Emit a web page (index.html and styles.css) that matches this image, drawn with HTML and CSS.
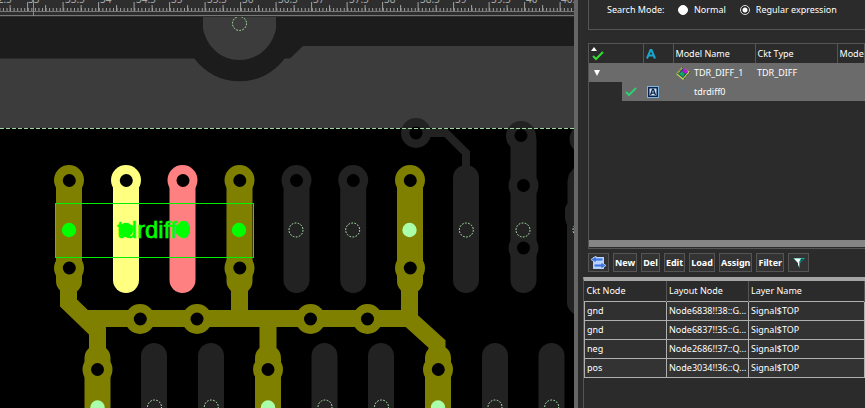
FILE: index.html
```html
<!DOCTYPE html>
<html lang="en">
<head>
<meta charset="utf-8">
<title>Layout Editor</title>
<link rel="stylesheet" href="styles.css">
</head>
<body>
<div class="app">
  <main class="board">
    <svg class="board-view" viewBox="0 0 574 408" preserveAspectRatio="xMinYMin slice" role="img" aria-label="Board layout">
      <defs>
        <g id="pad"><path class="grey-line" d="M0 180V280"/><circle r="15" cy="180" class="grey"/></g>
        <path id="low-pad" class="grey-line" d="M0 356V430"/>
        <circle id="hole" r="6.5"/>
        <circle id="via" r="15"/>
        <circle id="pin" r="7" class="pin"/>
      </defs>
      <rect width="574" height="408"/>
      <rect y="16" width="574" height="43" class="gap"/>
      <path class="plane" d="M0 58.500H195A56 56 0 0 0 284 58.500H290L303 46H574V128H0Z"/>
      <path class="gap" d="M194 58A56 56 0 0 0 285 58Z"/>
      <path class="plane" d="M203 16H276V29C272 47 258 60 239.500 60S207 47 203 29Z"/>

      <circle cx="416" cy="133" r="15" class="grey"/>
      <path class="grey-trace" d="M430 133H446L466 153V170"/>
      <path class="grey-line" d="M466 178V280M523.500 140V280"/>
      <g class="grey">
        <circle cx="521" cy="136" r="15"/><circle cx="523.500" cy="185.500" r="15"/><circle cx="523.500" cy="248" r="15"/>
        <circle cx="584.500" cy="139" r="15"/>
        <path d="M574 168L569 174 567.500 181V203L565 208V219L567 225V304Q568 310 574 314Z"/>
      </g>
      <use href="#pad" x="296.500"/><use href="#pad" x="353.200"/>
      <use href="#low-pad" x="154"/><use href="#low-pad" x="211"/><use href="#low-pad" x="324.500"/><use href="#low-pad" x="381"/><use href="#low-pad" x="495"/><use href="#low-pad" x="551.500"/>

      <path class="yellow-line" d="M126 180V280"/><circle cx="126" cy="180" r="15" class="yellow"/>
      <path class="pink-line" d="M182.500 180V280"/><circle cx="182.500" cy="180" r="15" class="pink"/>

      <path class="olive-line" d="M69 180V281M239.500 180V281M410 180V281M97.500 358V430M268 358V430M438 358V430"/>
      <path class="olive-trace" d="M68.500 285V303L97.500 331V360M84 318.500H410M239.500 285V318M268 318V360M409.500 285V319L437 344V360"/>
      <g class="olive">
        <use href="#via" x="69" y="180"/><use href="#via" x="239.500" y="180"/><use href="#via" x="410" y="180"/>
        <use href="#via" x="69" y="268"/><use href="#via" x="239.500" y="268"/><use href="#via" x="410" y="268"/>
        <use href="#via" x="140" y="319"/><use href="#via" x="197" y="319"/><use href="#via" x="310.500" y="319"/><use href="#via" x="367.500" y="319"/>
        <use href="#via" x="97.500" y="369.500"/><use href="#via" x="268" y="369.500"/><use href="#via" x="438" y="369.500"/>
      </g>
      <g>
        <use href="#hole" x="69.300" y="180.500"/><use href="#hole" x="126.300" y="180.500"/><use href="#hole" x="183" y="180.500"/><use href="#hole" x="239.800" y="180.500"/><use href="#hole" x="296.500" y="180.500"/><use href="#hole" x="353.300" y="180.500"/><use href="#hole" x="410.300" y="180.500"/>
        <use href="#hole" x="69.300" y="268"/><use href="#hole" x="239.800" y="268"/><use href="#hole" x="410.300" y="268"/>
        <use href="#hole" x="140.300" y="319"/><use href="#hole" x="197" y="319"/><use href="#hole" x="310.500" y="319"/><use href="#hole" x="367.500" y="319"/>
        <use href="#hole" x="97.500" y="369.500"/><use href="#hole" x="268" y="369.500"/><use href="#hole" x="438.300" y="369.500"/>
        <use href="#hole" x="416" y="133"/><use href="#hole" x="521" y="135.500"/><use href="#hole" x="523.500" y="185.500"/><use href="#hole" x="523.500" y="248"/>
      </g>
      <path class="outline" d="M0 128.500H574"/>
      <use href="#pin" x="239.500" y="23.500"/><use href="#pin" x="296" y="230"/><use href="#pin" x="352.700" y="230"/><use href="#pin" x="466.300" y="230"/><use href="#pin" x="523" y="230"/><use href="#pin" x="580" y="230"/>
      <use href="#pin" x="154.500" y="407"/><use href="#pin" x="211.300" y="407"/><use href="#pin" x="325" y="407"/><use href="#pin" x="381.500" y="407"/><use href="#pin" x="495" y="407"/><use href="#pin" x="551.700" y="407"/>
      <g class="mint"><circle cx="409.500" cy="230" r="7.200"/><circle cx="97.500" cy="407.500" r="7.200"/><circle cx="268" cy="407.500" r="7.200"/><circle cx="438" cy="407.500" r="7.200"/></g>
      <path class="select-box" d="M55.500 203.500H253.500V257.500H55.500Z"/>
      <text class="select-name" x="117" y="238">tdrdiff0</text>
      <g class="green"><circle cx="69" cy="230" r="7.200"/><circle cx="126" cy="230" r="7.200"/><circle cx="182.500" cy="230" r="7.200"/><circle cx="239" cy="230" r="7.200"/></g>

      <rect width="574" height="17" class="ruler"/>
      <g class="ticks">
        <path class="tick-small" d="M-.600 9.500H574"/>
        <path class="tick-mid" d="M9.600 8H574"/>
        <path class="tick-major" d="M27.100 6.500H574"/>
      </g>
      <g class="ruler-text">
        <text x="-8" y="3">32.5</text><text x="28" y="3">33</text><text x="65" y="3">33.5</text><text x="100" y="3">34</text><text x="136" y="3">34.5</text><text x="171" y="3">35</text><text x="207" y="3">35.5</text><text x="242" y="3">36</text><text x="278" y="3">36.5</text><text x="313" y="3">37</text><text x="349" y="3">37.5</text><text x="384" y="3">38</text><text x="420" y="3">38.5</text><text x="455" y="3">39</text><text x="491" y="3">39.5</text><text x="526" y="3">40</text><text x="561" y="3">40.5</text>
      </g>
      <path class="ruler-edge" d="M0 11.500H574M0 15.500H574"/>
      <path class="cursor" d="M33.500 0V16"/>
    </svg>
  </main>
  <div class="splitter"></div>
  <aside class="side">
    <div class="search" role="radiogroup" aria-label="Search Mode">
      <span class="search-title">Search Mode:</span>
      <label class="option"><input type="radio" name="mode">Normal</label>
      <label class="option"><input type="radio" name="mode" checked>Regular expression</label>
    </div>
    <div class="models">
      <table class="model-table">
        <colgroup><col class="c-check"><col class="c-active"><col class="c-type"><col class="c-type"><col></colgroup>
        <thead>
          <tr>
            <th><svg class="icon-sort" viewBox="0 0 14 14"><path d="M3 0L6 4H0Z" fill="#fff"/><path d="M2 9L5 12 12 5" fill="none" stroke="#32dc32" stroke-width="2"/></svg></th>
            <th><svg class="icon-a" viewBox="0 0 10 10"><path d="M1 9.500L4.500 1H5.500L9 9.500M2.500 6.500H7.500" fill="none" stroke="#1ca5cc" stroke-width="2"/></svg></th>
            <th>Model Name</th><th>Ckt Type</th><th>Mode</th>
          </tr>
        </thead>
        <tbody>
          <tr class="picked">
            <td><svg class="icon-open" viewBox="0 0 8 8"><path d="M1 1H7L4 7Z" fill="#fff"/></svg></td>
            <td></td>
            <td><span class="name"><svg class="icon-chip" viewBox="0 0 14 14"><path d="M0 8L6 1 14 6 7 14Z" fill="#b9d64a"/><path d="M1 8L7 1M8 13L14 6" stroke="#26331a" stroke-dasharray="1 1"/><path d="M2 8L7 2 12 6 7 12Z" fill="#193c6b"/><path d="M3 8L6 5 9 8 7 11Z" fill="#15a365"/><path d="M6 5L8 2 12 5 10 8Z" fill="#b31cd0"/></svg>TDR_DIFF_1</span></td>
            <td>TDR_DIFF</td><td></td>
          </tr>
          <tr class="picked">
            <td class="branch"><svg class="icon-check" viewBox="0 0 12 10"><path d="M1 5L4 8 11 1" fill="none" stroke="#2bcf70" stroke-width="2"/></svg></td>
            <td><svg class="icon-box" viewBox="0 0 12 12"><rect x=".500" y=".500" width="11" height="11" fill="#08244d" stroke="#7fb4dd"/><rect x="2.500" y="2.500" width="7" height="7" fill="#d8e6f3"/><path d="M3.500 9L5.500 3.500H6.500L8.500 9M4.500 7.200H7.500" fill="none" stroke="#08244d" stroke-width="1.300"/></svg></td>
            <td><span class="name"><svg class="icon-chip" viewBox="0 0 14 14"><path d="M6.500 1V6.500H12" fill="none" stroke="#3f7196" stroke-dasharray="1 1"/></svg>tdrdiff0</span></td>
            <td></td><td></td>
          </tr>
        </tbody>
      </table>
      <div class="scrollbar"></div>
    </div>
    <div class="toolbar">
      <button class="swap" aria-label="Refresh"><svg class="icon-swap" viewBox="0 0 16 14"><path d="M2 1H13V13H2Z" fill="#a9ceff"/><path d="M5 0L0 3.500 5 7V5H12V2H5ZM10 6L15 9.500 10 13V11H3V8H10Z" fill="#3f76e4" stroke="#d5e6ff" stroke-width=".700"/></svg></button>
      <button>New</button><button>Del</button><button>Edit</button><button>Load</button><button>Assign</button><button>Filter</button>
      <button class="swap" aria-label="Filter list"><svg class="icon-funnel" viewBox="0 0 12 10"><path d="M0 0H12L7 5V10L5 8V5Z" fill="#19a79b"/><path d="M1 .500H8L6 4V8L5 7V5Z" fill="#fff"/><path d="M8 1H10.500L7 4.500Z" fill="#064c48"/></svg></button>
    </div>
    <div class="nodes">
      <table class="node-table">
        <colgroup><col class="c-node"><col class="c-node"><col></colgroup>
        <thead><tr><th>Ckt Node</th><th>Layout Node</th><th>Layer Name</th></tr></thead>
        <tbody>
          <tr><td>gnd</td><td>Node6838!!38::G...</td><td>Signal$TOP</td></tr>
          <tr><td>gnd</td><td>Node6837!!35::G...</td><td>Signal$TOP</td></tr>
          <tr><td>neg</td><td>Node2686!!37::Q...</td><td>Signal$TOP</td></tr>
          <tr><td>pos</td><td>Node3034!!36::Q...</td><td>Signal$TOP</td></tr>
        </tbody>
      </table>
    </div>
  </aside>
</div>
</body>
</html>
```

FILE: styles.css
```css
* { box-sizing: border-box; }
body {
  margin: 0;
  background: #2b2b2b;
  color: #fff;
  font: 9px/14px "Noto Sans", "Open Sans", sans-serif;
}
svg { display: block; }
.app {
  display: grid;
  grid-template-columns: minmax(0, 2fr) 4px minmax(0, 1fr);
  height: 100vh;
  overflow: hidden;
}
.board { min-width: 0; overflow: hidden; background: #000; }
.board-view { width: 100%; height: 100%; }
.splitter { background: #666; }

/* Board drawing */
.gap { fill: #1c1c1c; }
.plane { fill: #3c3c3c; }
.grey { fill: #222; }
.olive { fill: #808000; }
.yellow { fill: #ffff80; }
.pink { fill: #ff8080; }
.mint { fill: #aaffaa; }
.green { fill: #0f0; }
.grey-line, .olive-line, .yellow-line, .pink-line {
  fill: none;
  stroke-width: 26;
  stroke-linecap: round;
}
.grey-line, .grey-trace { stroke: #222; }
.olive-line, .olive-trace { stroke: #808000; }
.yellow-line { stroke: #ffff80; }
.pink-line { stroke: #ff8080; }
.grey-trace { fill: none; stroke-width: 8; }
.olive-trace { fill: none; stroke-width: 17; }
.pin { fill: none; stroke: #b4f0b4; stroke-dasharray: 1.7 1.44; }
.outline { stroke: #9bd89b; stroke-dasharray: 4 2; }
.select-box { fill: none; stroke: #00f000; stroke-width: 1; shape-rendering: crispEdges; }
.select-name {
  fill: #0f0;
  stroke: #0f0;
  stroke-width: .6;
  font: 24px "Liberation Sans", sans-serif;
}

.ruler { fill: #2e2e2e; }
.ticks { fill: none; stroke: #a0a0a0; }
.tick-small { stroke-width: 3; stroke-dasharray: 1 2.55; }
.tick-mid { stroke-width: 6; stroke-dasharray: 1 34.5; }
.tick-major { stroke-width: 9; stroke-dasharray: 1 34.5; }
.ruler-text { fill: #aaa; font: 10px "Noto Sans", sans-serif; }
.ruler-edge { stroke: #777; }
.cursor { stroke: #2bb5bf; shape-rendering: crispEdges; }

/* Side panel */
.side {
  display: flex;
  flex-direction: column;
  min-width: 0;
  padding-left: 5px;
  overflow: hidden;
}
.search {
  display: flex;
  align-items: center;
  height: 30px;
  margin-left: 5px;
  padding: 0 0 10px 18px;
  border: solid #555;
  border-width: 0 0 1px 1px;
  white-space: nowrap;
}
.search-title { width: 71px; }
.option { display: flex; align-items: center; gap: 6px; margin-right: 14px; }
.option input {
  appearance: none;
  width: 10px;
  height: 10px;
  margin: 0;
  border: 1px solid #fff;
  border-radius: 50%;
  background: #fff;
}
.option input:checked {
  border-color: #ddd;
  background: radial-gradient(circle, #fff 2px, #222 3px);
}
.models {
  display: flex;
  flex: 1;
  flex-direction: column;
  justify-content: space-between;
  margin: 13px 0 0 5px;
  padding-bottom: 1px;
  border: solid #555;
  border-width: 1px 0 1px 1px;
}
table { width: 100%; border-collapse: collapse; table-layout: fixed; }
th, td {
  height: 19px;
  padding: 1px 2px 0;
  overflow: hidden;
  font-weight: 400;
  text-align: left;
  white-space: nowrap;
}
.c-check { width: 54px; }
.c-active { width: 30px; }
.c-type { width: 82px; }
.model-table th { border-right: 1px solid #555; }
.picked { background: #6b6b6b; }
.name { display: flex; align-items: center; gap: 4px; padding-left: 1px; }
.branch { background: linear-gradient(90deg, #2b2b2b 33px, #6b6b6b 33px); }
.icon-sort { width: 14px; height: 14px; }
.icon-a { width: 10px; height: 10px; }
.icon-open { width: 8px; height: 8px; margin-left: 2px; }
.icon-chip { width: 14px; height: 14px; }
.icon-check { width: 12px; height: 10px; margin-left: 34px; }
.icon-box { width: 12px; height: 12px; margin-left: 2px; }
.scrollbar { height: 7px; background: #858585; }
.toolbar { display: flex; gap: 4px; margin: 4px 0 5px 5px; }
button {
  height: 19px;
  padding: 1px 1px 0;
  border: 1px solid #555;
  background: #333;
  color: #fff;
  font: 700 9px/14px "Noto Sans", "Open Sans", sans-serif;
}
.swap { display: grid; place-items: center; width: 21px; }
.icon-swap { width: 16px; height: 14px; }
.icon-funnel { width: 12px; height: 10px; }
.nodes {
  height: 131px;
  border-top: 4px solid #a5a5a5;
  border-left: 1px solid #555;
}
.c-node { width: 82px; }
.node-table th { height: 20px; border-right: 1px solid #555; }
.node-table td { border: 1px solid #b0b0b0; background: #303030; }
.node-table td:nth-child(even), .node-table tr:nth-child(even) td { background: #333; }
```
